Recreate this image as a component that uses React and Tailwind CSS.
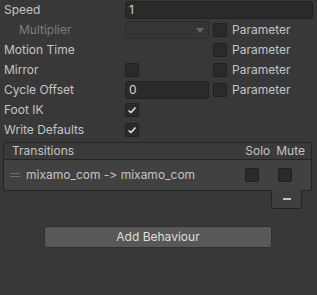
// Unity inspector — Animator state panel

const FONT = { fontFamily: 'Inter, "Noto Sans", sans-serif' }

function Check({ on }) {
  return (
    <div className="w-[14px] h-[14px] shrink-0 rounded-[2px] bg-[#2a2a2a] border border-[#1f1f1f] flex items-center justify-center">
      {on && (
        <svg width="10" height="10" viewBox="0 0 10 10">
          <polyline points="1.5,5.5 4,7.5 8.5,2.5" fill="none" stroke="#e6e6e6" strokeWidth="1.6" />
        </svg>
      )}
    </div>
  )
}

function Param() {
  return (
    <div className="flex items-center gap-[5px] ml-[4px]">
      <Check />
      <span className="text-[#c4c4c4]">Parameter</span>
    </div>
  )
}

function Row({ label, indent, dim, children }) {
  return (
    <div className="flex items-center h-[18px]">
      <div className={`w-[125px] shrink-0 ${indent ? 'pl-[19px]' : 'pl-[4px]'} ${dim ? 'text-[#7d7d7d]' : 'text-[#c4c4c4]'}`}>
        {label}
      </div>
      {children}
    </div>
  )
}

export default function App() {
  return (
    <div className="w-[317px] h-[295px] bg-[#383838] text-[12px] leading-none overflow-hidden [font-feature-settings:'calt'_0]" style={FONT}>
      <div className="flex flex-col gap-[2px] pt-[1px]">
        <Row label="Speed">
          <div className="w-[188px] h-[18px] rounded-[3px] bg-[#2a2a2a] border border-[#212121] flex items-center pl-[3px] text-[#d2d2d2]">
            1
          </div>
        </Row>
        <Row label="Multiplier" indent dim>
          <div className="w-[84px] h-[18px] rounded-[3px] bg-[#353535] border border-[#2c2c2c] flex items-center justify-end pr-[4px]">
            <svg width="8" height="5" viewBox="0 0 8 5"><polygon points="0,0 8,0 4,5" fill="#6a6a6a" /></svg>
          </div>
          <Param />
        </Row>
        <Row label="Motion Time">
          <div className="w-[84px]" />
          <Param />
        </Row>
        <Row label="Mirror">
          <div className="w-[84px]"><Check /></div>
          <Param />
        </Row>
        <Row label="Cycle Offset">
          <div className="w-[84px] h-[18px] rounded-[3px] bg-[#2a2a2a] border border-[#212121] flex items-center pl-[3px] text-[#d2d2d2]">
            0
          </div>
          <Param />
        </Row>
        <Row label="Foot IK"><Check on /></Row>
        <Row label="Write Defaults"><Check on /></Row>
      </div>

      <div className="mt-[3px] ml-[3px] w-[309px]">
        <div className="h-[18px] rounded-t-[3px] bg-[#3a3a3a] border border-[#242424] flex items-center text-[#c4c4c4]">
          <span className="pl-[8px] flex-1">Transitions</span>
          <span className="mr-[6px]">Solo</span>
          <span className="mr-[6px]">Mute</span>
        </div>
        <div className="h-[31px] bg-[#414141] border border-t-0 border-[#242424] rounded-b-[3px] rounded-tr-none flex items-center text-[#c4c4c4]">
          <div className="ml-[6px] mr-[6px] w-[10px] flex flex-col gap-[2px]">
            <div className="h-[1px] bg-[#6c6c6c]" />
            <div className="h-[1px] bg-[#6c6c6c]" />
          </div>
          <span className="flex-1 [font-feature-settings:'calt'_0,'liga'_0]">mixamo_com -&gt; mixamo_com</span>
          <div className="mr-[19px]"><Check /></div>
          <div className="mr-[19px]"><Check /></div>
        </div>
        <div className="flex justify-end pr-[10px]">
          <div className="w-[31px] h-[19px] -mt-[1px] bg-[#3f3f3f] border border-t-0 border-[#242424] rounded-b-[3px] flex items-center justify-center">
            <div className="w-[8px] h-[2px] bg-[#c8c8c8]" />
          </div>
        </div>
      </div>

      <div className="mt-[17px] flex justify-center pr-[1px]">
        <div className="w-[228px] h-[22px] rounded-[3px] bg-[#585858] border border-[#303030] flex items-center justify-center text-[#dedede]">
          Add Behaviour
        </div>
      </div>
    </div>
  )
}
